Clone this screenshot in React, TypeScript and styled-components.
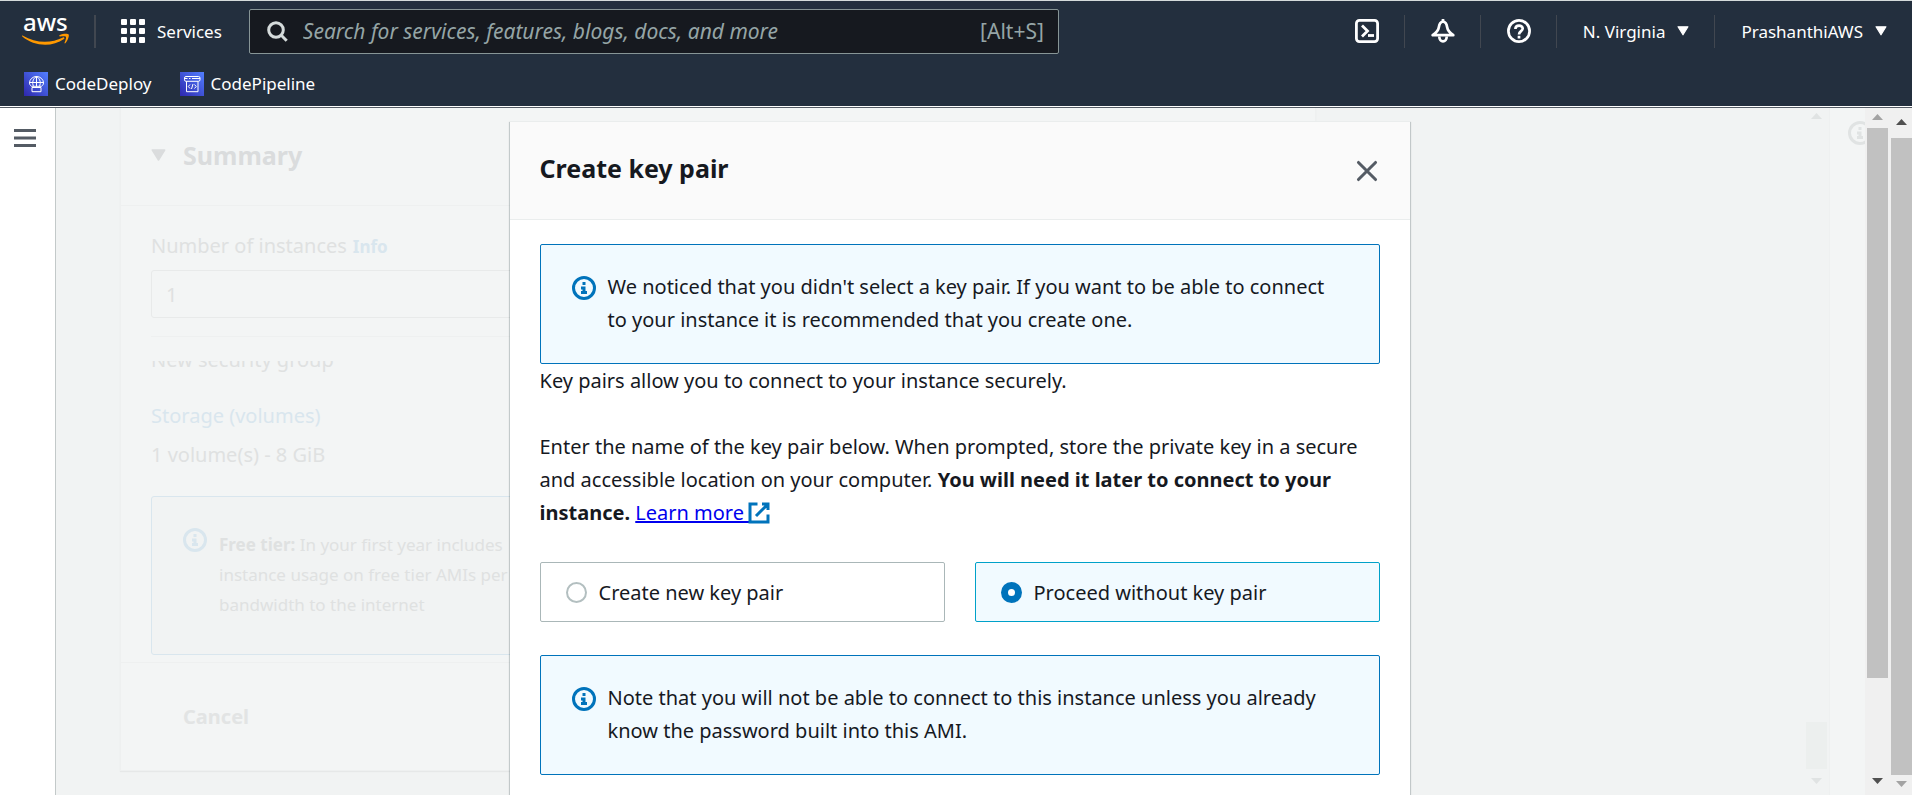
import React, { useState } from 'react';
import styled, { createGlobalStyle, css } from 'styled-components';

const color = {
  navy: '#232f3e',
  ink: '#16191f',
  blue: '#0073bb',
  alertBg: '#f1faff',
  canvas: '#f1f3f3',
  faded: '#dfe1e1',
  fadedLine: '#eef0f0',
  fadedBlue: '#d9e6ee',
};

const GlobalStyle = createGlobalStyle`
  *, *::before, *::after { box-sizing: border-box; }
  body { margin: 0; }
  body, button, input {
    font-family: "Noto Sans", "Open Sans", sans-serif;
    font-size: 20px;
    line-height: 33px;
    color: ${color.ink};
  }
  button { background: none; border: 0; padding: 0; cursor: pointer; }
  h2, p { margin: 0; }
  svg { display: block; flex: none; }
`;

const Shell = styled.div`
  display: flex;
  flex-direction: column;
  height: 100vh;
  overflow: hidden;
`;

/* ---------- top navigation ---------- */

const Header = styled.header`
  flex: none;
  background: ${color.navy};
  border-top: 1px solid #d5dbdb;
  border-bottom: 1px solid #ffffff;
`;

const TopRow = styled.div`
  display: flex;
  align-items: center;
  height: 60px;
  padding: 0 25px 0 22px;
`;

const Divider = styled.span`
  flex: none;
  width: 2px;
  height: 33px;
  margin: 0 25px 0 24px;
  background: #414750;
`;

const NavButton = styled.button`
  display: flex;
  align-items: center;
  gap: 12px;
  color: #ffffff;
  font-size: 17px;
  white-space: nowrap;
`;

const SearchBox = styled.label`
  display: flex;
  align-items: center;
  gap: 15px;
  flex: 0 1 810px;
  height: 45px;
  margin-left: 27px;
  padding: 0 14px 0 17px;
  background: ${color.ink};
  border: 1px solid #879596;
  border-radius: 2px;
  color: #95a5a6;
  font-size: 21px;
`;

const SearchInput = styled.input`
  flex: 1;
  min-width: 0;
  padding: 0;
  border: 0;
  outline: 0;
  background: transparent;
  color: #ffffff;
  font-size: 21px;
  &::placeholder {
    color: #95a5a6;
    font-style: italic;
    opacity: 1;
  }
`;

const Tools = styled.nav`
  display: flex;
  margin-left: auto;
`;

const ToolButton = styled(NavButton)`
  height: 33px;
  padding: 0 25px 0 26px;
  border-left: 1px solid #414750;
  &:first-child { border-left: 0; }
  &:last-child { padding-right: 0; }
`;

const FavoritesRow = styled.nav`
  display: flex;
  gap: 28px;
  height: 45px;
  align-items: center;
  padding: 0 24px;
`;

const FavoriteLink = styled.a`
  display: flex;
  align-items: center;
  gap: 7px;
  color: #ffffff;
  font-size: 17px;
  text-decoration: none;
`;

/* ---------- page frame ---------- */

const Body = styled.div`
  display: flex;
  flex: 1;
  min-height: 0;
  border-top: 1px solid #545b64;
`;

const SideRail = styled.aside`
  flex: none;
  width: 56px;
  padding: 19px 14px;
  background: #ffffff;
  border-right: 1px solid #c3c9c9;
`;

const MenuButton = styled.button`
  display: block;
`;

const Workspace = styled.div`
  position: relative;
  display: flex;
  flex: 1;
  min-width: 0;
  overflow: hidden;
  background: ${color.canvas};
`;

const Content = styled.main`
  flex: 1;
  min-width: 0;
  padding-left: 64px;
`;

const InfoRail = styled.aside`
  flex: none;
  width: 36px;
  padding: 13px 0 0 18px;
  overflow: hidden;
  background: #f3f5f5;
  border-left: 1px solid ${color.fadedLine};
  color: #e0e3e3;
`;

/* ---------- faded summary card ---------- */

const SummaryCard = styled.section`
  width: 71%;
  background: #f3f5f5;
  border: 1px solid ${color.fadedLine};
  border-top: 0;
  box-shadow: 0 1px 1px #e6e8e8;
  color: ${color.faded};
`;

const SummaryHeader = styled.h2`
  display: flex;
  align-items: center;
  gap: 17px;
  height: 98px;
  padding: 0 30px 3px;
  border-bottom: 1px solid ${color.fadedLine};
  color: #dadcdd;
  font-size: 25px;
`;

const SummaryBody = styled.div`
  padding: 23px 30px 0;
`;

const FadedLink = styled.a`
  color: ${color.fadedBlue};
  text-decoration: none;
`;

const InfoLink = styled(FadedLink)`
  margin-left: 6px;
  font-size: 17px;
  font-weight: 700;
`;

const CountInput = styled.input`
  display: block;
  width: 100%;
  height: 48px;
  margin-top: 7px;
  padding: 0 14px;
  background: transparent;
  border: 1px solid #e8eaea;
  border-radius: 3px;
  color: ${color.faded};
`;

const DetailScroll = styled.div`
  margin-top: 18px;
  padding-top: 24px;
  border-top: 1px solid ${color.fadedLine};
`;

const DetailList = styled.div`
  display: flex;
  flex-direction: column;
  gap: 6px;
  overflow: hidden;
`;

const ScrolledLine = styled.p`
  margin: -18px 0 17px;
`;

const FreeTier = styled.div`
  display: flex;
  gap: 12px;
  height: 159px;
  margin-top: 19px;
  padding: 31px;
  border: 1px solid ${color.fadedBlue};
  border-radius: 3px;
  background: #f1f3f3;
  font-size: 17px;
  line-height: 30px;
  svg { color: ${color.fadedBlue}; }
  p { padding-top: 2px; }
`;

const TextLine = styled.span`
  display: block;
  white-space: nowrap;
`;

const SummaryFooter = styled.div`
  display: flex;
  align-items: center;
  height: 108px;
  margin-top: 7px;
  padding: 0 62px;
  border-top: 1px solid ${color.fadedLine};
`;

const CancelButton = styled.button`
  color: #e2e4e4;
  font-weight: 700;
`;

/* ---------- scroll bars ---------- */

const ScrollColumn = styled.div<{ $width: number; $faded?: boolean }>`
  display: flex;
  flex: none;
  flex-direction: column;
  align-items: center;
  width: ${p => p.$width}px;
  background: ${p => (p.$faded ? 'transparent' : '#f0f0f0')};
`;

const ScrollArrow = styled.div<{ $height: number; $tone: string }>`
  display: flex;
  flex: none;
  align-items: center;
  height: ${p => p.$height}px;
  padding-bottom: 2px;
  color: ${p => p.$tone};
`;

const ScrollThumb = styled.div<{ $share: number; $faded?: boolean }>`
  flex: ${p => p.$share};
  width: 21px;
  background: ${p => (p.$faded ? '#ecefee' : '#c1c1c1')};
`;

const ScrollSpace = styled.div<{ $share: number }>`
  flex: ${p => p.$share};
`;

/* ---------- dialog ---------- */

const Overlay = styled.div`
  position: absolute;
  inset: 0;
  display: flex;
  justify-content: center;
  align-items: flex-start;
  padding: 13px 22px 0 20px;
`;

const Dialog = styled.section`
  flex: 0 1 900px;
  padding-bottom: 60px;
  background: #ffffff;
  border-top: 1px solid #eaeded;
  box-shadow: 0 1px 1px rgba(0, 28, 36, 0.3), 1px 1px 1px rgba(0, 28, 36, 0.15),
    -1px 1px 1px rgba(0, 28, 36, 0.15);
`;

const DialogHeader = styled.header`
  display: flex;
  align-items: center;
  justify-content: space-between;
  height: 98px;
  padding: 0 31px 0 30px;
  background: #fafafa;
  border-bottom: 1px solid #eaeded;
`;

const DialogTitle = styled.h2`
  padding-bottom: 5px;
  font-size: 25px;
`;

const CloseButton = styled.button`
  color: #545b64;
`;

const DialogBody = styled.div`
  padding: 24px 30px;
`;

const Alert = styled.div`
  display: flex;
  gap: 12px;
  padding: 25px 31px 27px;
  background: ${color.alertBg};
  border: 1px solid ${color.blue};
  border-radius: 2px;
  svg { margin-top: 6px; color: ${color.blue}; }
`;

const Paragraph = styled.p`
  margin-bottom: 33px;
`;

const LearnMore = styled.a`
  color: #0000ee;
  svg {
    display: inline-block;
    margin-left: -2px;
    vertical-align: -5px;
    color: ${color.blue};
  }
`;

const Choices = styled.div`
  display: grid;
  grid-template-columns: 1fr 1fr;
  gap: 30px;
  margin-bottom: 33px;
`;

const Choice = styled.label<{ $selected: boolean }>`
  display: flex;
  align-items: center;
  gap: 12px;
  height: 60px;
  padding: 0 25px;
  border: 1px solid #aab7b8;
  border-radius: 2px;
  cursor: pointer;
  ${p =>
    p.$selected &&
    css`
      background: ${color.alertBg};
      border-color: #00a1c9;
    `}
`;

const Radio = styled.input`
  appearance: none;
  flex: none;
  width: 21px;
  height: 21px;
  margin: 0;
  background: #ffffff;
  border: 2px solid #b3bfc0;
  border-radius: 50%;
  &:checked { border: 7px solid ${color.blue}; }
`;

/* ---------- icons ---------- */

const AwsLogo = () => (
  <svg width="48" height="56" viewBox="0 -11 48 56" role="img" aria-label="AWS home">
    <text x="1" y="17" fontSize="24" fontWeight="500" fontFamily="Noto Sans, sans-serif" fill="#fff">
      aws
    </text>
    <path d="M.5 21.5C14 29.500 29 29.500 41 23.500C42 23 43 24 42 25C30 33.500 12 32.500.3 22.500C-.2 22 0 21.200.5 21.500Z" fill="#ff9900" />
    <path d="M37.500 21.300C41 19.500 46 19.500 46.700 20.600C47.300 22 45.800 27 43.300 29.200C42.700 29.600 42.300 29.300 42.600 28.600C43.400 26.600 44.500 23.600 43.900 22.800C43.200 22 40 22.300 38 22.500C37.300 22.500 37 21.700 37.500 21.300Z" fill="#ff9900" />
  </svg>
);

const GridIcon = () => (
  <svg width="24" height="24" viewBox="0 0 24 24" fill="#fff">
    {[0, 9, 18].map(y =>
      [0, 9, 18].map(x => <rect key={`${x}-${y}`} x={x} y={y} width="6" height="6" rx="1" />)
    )}
  </svg>
);

const SearchIcon = () => (
  <svg width="21" height="21" viewBox="0 0 21 21" fill="none" stroke="#d5dbdb" strokeWidth="3">
    <circle cx="9" cy="9" r="7.300" />
    <path d="M14 14l5.700 5.700" />
  </svg>
);

const TerminalIcon = () => (
  <svg width="24" height="24" viewBox="0 0 24 24" fill="none" stroke="#fff" strokeWidth="2.800">
    <rect x="1.400" y="1.400" width="21.200" height="21.200" rx="3" />
    <path d="M7 6.500l5.500 5.500L7 17.500" />
    <path d="M13 16.500h6" />
  </svg>
);

const BellIcon = () => (
  <svg width="24" height="24" viewBox="0 0 24 24" fill="none" stroke="#fff" strokeWidth="2.700" strokeLinejoin="round">
    <path d="M12 2.500C9.500 3 8.300 5 7.900 8C7.400 11.500 5 14 1.700 16.200H22.300C19 14 16.600 11.500 16.100 8C15.700 5 14.500 3 12 2.500Z" />
    <path d="M12 0v3" />
    <path d="M8.300 17.500C8.300 24 15.700 24 15.700 17.500" />
  </svg>
);

const HelpIcon = () => (
  <svg width="24" height="24" viewBox="0 0 24 24" fill="none" stroke="#fff" strokeWidth="2.700">
    <circle cx="12" cy="12" r="10.600" />
    <path d="M8.400 10C8.400 5.500 15.700 5.500 15.700 9.600C15.700 12.200 12 12.200 12 15.500" />
    <path d="M12 16.800v2.700" />
  </svg>
);

const Caret = ({ size = 12 }: { size?: number }) => (
  <svg width={size} height={size * 0.8} viewBox="0 0 15 12">
    <path d="M1.300 1h12.400L7.500 11Z" fill="currentColor" stroke="currentColor" strokeWidth="1.500" strokeLinejoin="round" />
  </svg>
);

const IconTile = ({ id, children }: { id: string; children: React.ReactNode }) => (
  <svg width="24" height="24" viewBox="0 0 24 24">
    <defs>
      <linearGradient id={id} x1="0" y1="1" x2="1" y2="0">
        <stop offset="0" stopColor="#2e27ad" />
        <stop offset="1" stopColor="#527fff" />
      </linearGradient>
    </defs>
    <rect width="24" height="24" fill={`url(#${id})`} />
    <g fill="none" stroke="#fff" strokeWidth="1">
      {children}
    </g>
  </svg>
);

const CodeDeployIcon = () => (
  <IconTile id="deploy">
    <path d="M5.500 11a7 6.500 0 0 1 14 0c0 1.300-.8 2.500-2 3.300H7.500c-1.200-.8-2-2-2-3.300Z" />
    <path d="M5.500 10.500h14M12.500 4.500v10M9.500 14.300C8 11 8.500 7 12.500 4.500C16.500 7 17 11 15.500 14.300" />
    <path d="M8 15.500h9v4.200H8z" />
  </IconTile>
);

const CodePipelineIcon = () => (
  <IconTile id="pipeline">
    <rect x="4.500" y="4.500" width="15.500" height="4.800" rx="1.500" />
    <path d="M4.500 6.500h3M9 6.500h1.500M12 6.500h8" />
    <path d="M6.500 9.300v10.400H18V9.300" />
    <path d="M10 12.500L8.300 14.500L10 16.500M14.500 12.500L16.200 14.500L14.500 16.500M13 12L11.500 17" />
  </IconTile>
);

const MenuIcon = () => (
  <svg width="22" height="22" viewBox="0 0 22 22" stroke="#545b64" strokeWidth="3">
    <path d="M0 3.500h22M0 11h22M0 18.500h22" />
  </svg>
);

const InfoIcon = () => (
  <svg width="24" height="24" viewBox="0 0 16 16" fill="none" stroke="currentColor" strokeWidth="2">
    <circle cx="8" cy="8" r="7" />
    <path d="M8 11V8H6M10 11H6M8 6V4" />
  </svg>
);

const CloseIcon = () => (
  <svg width="24" height="24" viewBox="0 0 16 16" fill="none" stroke="currentColor" strokeWidth="2" strokeLinecap="round">
    <path d="M2.300 2.300l11.400 11.400M13.700 2.300L2.300 13.700" />
  </svg>
);

const ExternalIcon = () => (
  <svg width="24" height="24" viewBox="0 0 16 16" fill="none" stroke="currentColor" strokeWidth="2">
    <path d="M10 2h4v4M6 10l8-8M14 9v5H2V2h5" />
  </svg>
);

const ArrowGlyph = ({ down }: { down?: boolean }) => (
  <svg width="11" height="6" viewBox="0 0 11 6" fill="currentColor">
    <path d={down ? 'M0 0h11L5.500 6z' : 'M0 6h11L5.500 0z'} />
  </svg>
);

/* ---------- page ---------- */

const options = [
  { id: 'create', label: 'Create new key pair' },
  { id: 'proceed', label: 'Proceed without key pair' },
];

export default function App() {
  const [choice, setChoice] = useState('proceed');
  const [count, setCount] = useState('1');

  return (
    <Shell>
      <GlobalStyle />
      <Header>
        <TopRow>
          <AwsLogo />
          <Divider />
          <NavButton>
            <GridIcon />
            Services
          </NavButton>
          <SearchBox>
            <SearchIcon />
            <SearchInput
              type="text"
              aria-label="Search"
              placeholder="Search for services, features, blogs, docs, and more"
            />
            <span>[Alt+S]</span>
          </SearchBox>
          <Tools>
            <ToolButton aria-label="CloudShell"><TerminalIcon /></ToolButton>
            <ToolButton aria-label="Notifications"><BellIcon /></ToolButton>
            <ToolButton aria-label="Help"><HelpIcon /></ToolButton>
            <ToolButton>N. Virginia <Caret /></ToolButton>
            <ToolButton>PrashanthiAWS <Caret /></ToolButton>
          </Tools>
        </TopRow>
        <FavoritesRow>
          <FavoriteLink href="#codedeploy"><CodeDeployIcon />CodeDeploy</FavoriteLink>
          <FavoriteLink href="#codepipeline"><CodePipelineIcon />CodePipeline</FavoriteLink>
        </FavoritesRow>
      </Header>

      <Body>
        <SideRail>
          <MenuButton aria-label="Open navigation"><MenuIcon /></MenuButton>
        </SideRail>

        <Workspace>
          <Content>
            <SummaryCard>
              <SummaryHeader><Caret size={15} />Summary</SummaryHeader>
              <SummaryBody>
                <label htmlFor="instances">Number of instances</label>
                <InfoLink href="#info">Info</InfoLink>
                <CountInput id="instances" value={count} onChange={e => setCount(e.target.value)} />
                <DetailScroll>
                  <DetailList>
                    <ScrolledLine>New security group</ScrolledLine>
                    <FadedLink href="#storage">Storage (volumes)</FadedLink>
                    <p>1 volume(s) - 8 GiB</p>
                    <FreeTier>
                      <InfoIcon />
                      <p>
                        <TextLine><b>Free tier:</b> In your first year includes</TextLine>
                        <TextLine>instance usage on free tier AMIs per</TextLine>
                        <TextLine>bandwidth to the internet</TextLine>
                      </p>
                    </FreeTier>
                  </DetailList>
                </DetailScroll>
              </SummaryBody>
              <SummaryFooter>
                <CancelButton>Cancel</CancelButton>
              </SummaryFooter>
            </SummaryCard>
          </Content>

          <ScrollColumn $width={25} $faded>
            <ScrollArrow $height={17} $tone="#e0e3e3"><ArrowGlyph /></ScrollArrow>
            <ScrollSpace $share={597} />
            <ScrollThumb $share={47} $faded />
            <ScrollArrow $height={26} $tone="#e0e3e3"><ArrowGlyph down /></ScrollArrow>
          </ScrollColumn>
          <InfoRail><InfoIcon /></InfoRail>

          <Overlay>
            <Dialog role="dialog" aria-labelledby="dialog-title">
              <DialogHeader>
                <DialogTitle id="dialog-title">Create key pair</DialogTitle>
                <CloseButton aria-label="Close"><CloseIcon /></CloseButton>
              </DialogHeader>
              <DialogBody>
                <Alert>
                  <InfoIcon />
                  <p>
                    We noticed that you didn't select a key pair. If you want to be able to connect
                    to your instance it is recommended that you create one.
                  </p>
                </Alert>
                <Paragraph>Key pairs allow you to connect to your instance securely.</Paragraph>
                <Paragraph>
                  Enter the name of the key pair below. When prompted, store the private key in a secure
                  and accessible location on your computer.{' '}
                  <b>You will need it later to connect to your instance.</b>{' '}
                  <LearnMore href="#learn-more">Learn more <ExternalIcon /></LearnMore>
                </Paragraph>
                <Choices>
                  {options.map(o => (
                    <Choice key={o.id} $selected={choice === o.id}>
                      <Radio
                        type="radio"
                        name="key-pair"
                        checked={choice === o.id}
                        onChange={() => setChoice(o.id)}
                      />
                      {o.label}
                    </Choice>
                  ))}
                </Choices>
                <Alert>
                  <InfoIcon />
                  <p>
                    Note that you will not be able to connect to this instance unless you already
                    know the password built into this AMI.
                  </p>
                </Alert>
              </DialogBody>
            </Dialog>
          </Overlay>
        </Workspace>

        <ScrollColumn $width={25}>
          <ScrollArrow $height={20} $tone="#a3a3a3"><ArrowGlyph /></ScrollArrow>
          <ScrollThumb $share={551} />
          <ScrollSpace $share={91} />
          <ScrollArrow $height={26} $tone="#505050"><ArrowGlyph down /></ScrollArrow>
        </ScrollColumn>
        <ScrollColumn $width={22}>
          <ScrollArrow $height={30} $tone="#505050"><ArrowGlyph /></ScrollArrow>
          <ScrollThumb $share={1} />
          <ScrollArrow $height={20} $tone="#a3a3a3"><ArrowGlyph down /></ScrollArrow>
        </ScrollColumn>
      </Body>
    </Shell>
  );
}
